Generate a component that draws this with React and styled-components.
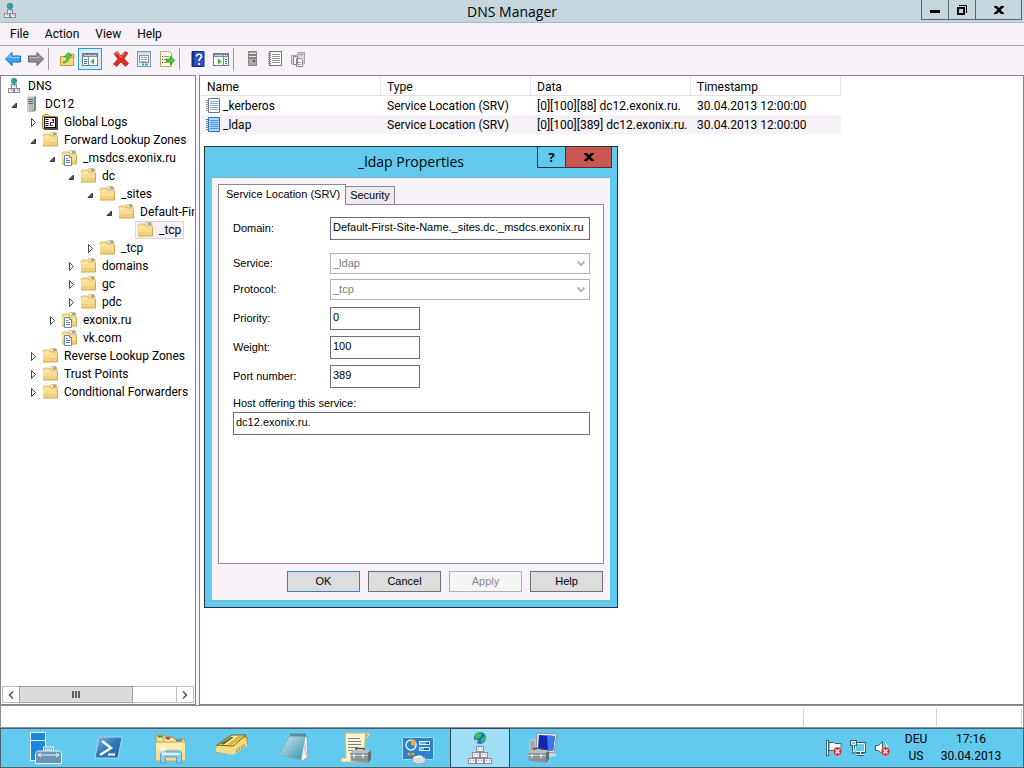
import React, { useState } from "react";
import styled, { createGlobalStyle, css } from "styled-components";

const GlobalStyle = createGlobalStyle`
  * {
    box-sizing: border-box;
  }
  body {
    margin: 0;
    background: #f6f2f7;
    color: #000;
    font: 12px/18px Roboto, sans-serif;
  }
  button, input, select {
    margin: 0;
    padding: 0;
    border: 0;
    border-radius: 0;
    color: inherit;
    font: inherit;
    background: none;
  }
`;

/* small icons, 16x16 */

const Svg = ({ size = 16, children }) => (
  <svg width={size} height={size} viewBox={`0 0 ${size} ${size}`} aria-hidden="true">
    {children}
  </svg>
);

const Box = ({ x, y }) => (
  <g>
    <rect x={x} y={y} width="5" height="4" fill="#f4f3f7" stroke="#8d8a98" />
    <path d={`M${x + 2} ${y + 1.5}h2`} stroke="#8d8a98" />
  </g>
);

const DnsIcon = () => (
  <Svg>
    <circle cx="8" cy="3" r="3" fill="#2a7fd0" />
    <path d="M6 1.500l2-1 1 2-1 1.500-2 .5zM9 3.500l1.500-.5-.5 2-1.500.8z" fill="#3cb54a" />
    <Box x={5.5} y={6.5} />
    <Box x={2.5} y={10.5} />
    <Box x={8.5} y={10.5} />
  </Svg>
);

const ServerIcon = () => (
  <Svg>
    <path d="M4 2l1-2h7l1 2z" fill="#d5d9dc" />
    <path d="M11 2l1-2 1 1v13l-2 2z" fill="#7b858a" />
    <rect x="4" y="1" width="7" height="15" fill="#b4bcc0" />
    <rect x="4" y="1" width="2" height="15" fill="#ccd3d6" />
    <path d="M5 3.500h5M5 5.500h5M5 7.500h5" stroke="#5f686d" />
    <rect x="9" y="13" width="2" height="2" fill="#5be03a" />
  </Svg>
);

const FolderShape = () => (
  <g>
    <path d="M8 4V1.500l1-1h5l1 1V8H8z" fill="#e9c873" stroke="#d0a850" strokeWidth=".6" />
    <path d="M9 2h5" stroke="#fff" strokeWidth="1.500" />
    <path d="M11 2h3" stroke="#4c97d8" strokeWidth="1.500" />
    <path d="M1 14V3l1-1h5l2 2h6v10z" fill="#f7dc94" />
    <path d="M1 10h14v4H1z" fill="#f2cf7c" />
    <path d="M1 4.500V3l1-1h5l2 2h6" fill="none" stroke="#e2be68" />
    <path d="M1 14h14.500V5" fill="none" stroke="#d0a850" />
    <path d="M2 5h5l1 1" fill="none" stroke="#fff0c0" />
  </g>
);

const FolderIcon = () => (
  <Svg>
    <FolderShape />
  </Svg>
);

const ZoneIcon = () => (
  <Svg>
    <FolderShape />
    <path d="M3.500 5.500h5l2 2v8h-7z" fill="#fff" stroke="#7186a5" />
    <path d="M8.500 5.500v2h2" fill="#dfe8f3" stroke="#7186a5" />
    <path d="M5 8.500h2M5 10.500h4M5 12.500h4" stroke="#4b87cc" />
  </Svg>
);

const LogsIcon = () => (
  <Svg>
    <path d="M.5 3V2l1.500-1.500h4L8 2.500h7V4" fill="#f7f19c" stroke="#a59a2c" />
    <path d="M.5 2.500h13v12H.5z" fill="#f4ee9c" stroke="#8f8735" />
    <path d="M14 3h2v13H2v-2h12z" fill="#4b4c44" />
    <rect x="2.500" y="3.500" width="11" height="10" fill="#fff" stroke="#000" />
    <path d="M5 5v8" stroke="#000" strokeWidth="3" strokeDasharray="1 1" />
    <path d="M8.500 8v4M11.500 5v4" stroke="#1c1cc0" />
    <path d="M9 8.500h2M9 11.500h2M10.500 5v2" stroke="#d01616" strokeWidth="1" />
  </Svg>
);

const RecordIcon = ({ active }) => (
  <Svg>
    <path d="M3.500.500h11v14h-11z" fill={active ? "#a9d6f8" : "#fff"} stroke={active ? "#2d6fb5" : "#68748f"} />
    <path
      d="M5 3.500h8.500M5 5.500h8.500M5 7.500h8.500M5 9.500h8.500M5 11.500h8.500"
      stroke={active ? "#4e97dc" : "#86aecb"}
    />
    <path d="M1 2.500h3M1 4.500h3M1 6.500h3M1 8.500h3M1 10.500h3M1 12.500h3" stroke={active ? "#4b7fb5" : "#8d8d95"} />
  </Svg>
);

const ArrowIcon = ({ forward }) => (
  <Svg>
    <path
      d={forward ? "M15.500 8l-6.500-6.500v3.500h-8.500v6h8.500V14.500z" : "M.5 8L7 1.500v3.500h8.500v6H7v3.500z"}
      fill={forward ? "#8f8f92" : "#37a6f0"}
      stroke={forward ? "#5f5f63" : "#1b6db5"}
    />
    <path d={forward ? "M1.500 6.500h9v-2" : "M2.500 7l3-3v2.500h9"} fill="none" stroke={forward ? "#c0c0c4" : "#93d8fb"} />
  </Svg>
);

const FolderUpIcon = () => (
  <Svg>
    <path d="M8 4l1-1h5l1 1v3" fill="#efd07d" stroke="#c29a41" />
    <path d="M1.500 14.500v-9h5l1 1h7v8z" fill="#f5d882" stroke="#c29a41" />
    <path d="M4 11c3 0 4-2 4-5h-3l4-4.500L13 5h-2.500c0 5-3 7-6.500 7z" fill="#55cc33" stroke="#2d9a1a" strokeWidth=".7" />
  </Svg>
);

const ConsoleTreeIcon = ({ right }) => (
  <Svg>
    <rect x=".5" y="2.500" width="15" height="12" fill="#fff" stroke="#6d7b8c" />
    <path d="M1 3h14v3H1z" fill="#7d8b9c" />
    <path d="M2 4.500h8" stroke="#c5d2df" />
    <path d="M11 4.500h1M13 4.500h1" stroke="#fff" />
    <path d={right ? "M10.500 6v8" : "M6.500 6v8"} stroke="#8492a2" />
    <path
      d={right ? "M12 8.500h2M12 10.500h2M12 12.500h2" : "M2 8.500h3M2 10.500h3M2 12.500h3"}
      stroke="#3577c4"
    />
    <path d={right ? "M5 7.500l3.500 3L5 13.500z" : "M12 7.500l-3.500 3 3.500 3z"} fill="#35b52f" />
  </Svg>
);

const DeleteIcon = () => (
  <Svg>
    <path d="M1 3l3-2.500 4 4.500 4-4.500L15 2l-4 5.500 4.500 5-3 3L8 11l-4.500 4.500L.5 13 5 8z" fill="#e12a22" stroke="#a81512" strokeWidth=".6" />
    <path d="M2.500 3L4 2l4 4.500L12 2" stroke="#f58a82" fill="none" />
  </Svg>
);

const PropertiesIcon = () => (
  <Svg>
    <rect x="1.500" y=".5" width="13" height="15" fill="#e9edf2" stroke="#8694a3" />
    <path d="M2 2h12" stroke="#b6c2ce" />
    <rect x="3.500" y="4.500" width="9" height="7" fill="#fff" stroke="#8694a3" />
    <path d="M5 6.500h2M5 8.500h2" stroke="#56a8dd" />
    <path d="M8 6.500h3M8 8.500h3M5 10.500h5" stroke="#9aa5b0" />
    <path d="M6 13.500h2M9 13.500h3" stroke="#2fa8e0" strokeWidth="2" />
  </Svg>
);

const ExportIcon = () => (
  <Svg>
    <path d="M1.500.5h9l2 2v13h-11z" fill="#fdf8dc" stroke="#b4a878" />
    <path d="M3 5.500h1M3 8.500h1M3 11.500h1" stroke="#333" />
    <path d="M5 5.500h5M5 8.500h3M5 11.500h3" stroke="#8c8fa0" />
    <path d="M7.500 8h4V5l4 4.500-4 4.500v-3h-4z" fill="#58cb3e" stroke="#2f9b20" />
  </Svg>
);

const HelpIcon = () => (
  <Svg>
    <path d="M2 .5h12v15H2z" fill="#2d50c4" stroke="#152d83" />
    <path d="M2 1h2v14H2z" fill="#152d83" />
    <path d="M6.500 5.500c0-3 5-3 5 0 0 2-2.500 2-2.500 4.500M9 12v2" stroke="#fff" strokeWidth="1.700" fill="none" />
  </Svg>
);

const GrayServerIcon = () => (
  <Svg>
    <path d="M4.500.500h8v14h-8z" fill="#a9a9a9" stroke="#858585" />
    <path d="M5 2.500h7M5 5.500h7" stroke="#e6e6e6" />
    <path d="M5 4h7M5 7h7" stroke="#555" />
    <rect x="9" y="9" width="2" height="2" fill="#555" />
  </Svg>
);

const GrayRecordIcon = () => (
  <Svg>
    <rect x="2.500" y=".5" width="12" height="14" fill="#fafafa" stroke="#777" />
    <path d="M5 3.500h8M5 5.500h8M5 7.500h8M5 9.500h8M5 11.500h8" stroke="#999" />
    <path d="M1 2.500h3M1 4.500h3M1 6.500h3M1 8.500h3M1 10.500h3M1 12.500h3" stroke="#888" />
  </Svg>
);

const GrayZoneIcon = () => (
  <Svg>
    <path d="M1.500 13V4.500h6v-3h7v11.500z" fill="#d6d6d6" stroke="#a5a5a5" />
    <path d="M9 3.500h4" stroke="#888" />
    <path d="M3.500 5.500h4v8h-4zM6.500 7.500h4l2 2v6h-6z" fill="#f8f8f8" stroke="#888" />
    <path d="M8 11.500h3M8 13.500h3" stroke="#999" />
  </Svg>
);

const Expander = ({ open }) => (
  <svg width="12" height="12" viewBox="0 0 12 12" aria-hidden="true">
    {open ? (
      <path d="M8.500 5v4.500H4z" fill="#595959" stroke="#333" />
    ) : (
      <path d="M4.500 2.500v8l4-4z" fill="#fff" stroke="#444" />
    )}
  </svg>
);

const CloseGlyph = () => (
  <svg width="10" height="8" viewBox="0 0 10 8" aria-hidden="true">
    <path d="M0 0h3l2 2 2-2h3v1L6.500 4 10 7v1H7L5 6 3 8H0V7l3.500-3L0 1z" fill="#000" />
  </svg>
);

/* taskbar icons, 32x32 */

const Toolcase = ({ x, y }) => (
  <g transform={`translate(${x} ${y})`}>
    <path d="M6 5V1.500h8V5" fill="none" stroke="#4e5557" strokeWidth="1.500" />
    <path d="M0 6l4-3h16l-2 3z" fill="#b9bfc1" />
    <path d="M18 6l3-3v9l-3 4z" fill="#666d70" />
    <path d="M0 6h18v10L1 14z" fill="#8c9497" />
    <path d="M0 8.500h18" stroke="#cdd2d4" />
    <path d="M4 7v4M13 7v4" stroke="#e8eaeb" strokeWidth="1.500" />
  </g>
);

const ServerManagerIcon = () => (
  <Svg size={32}>
    <path d="M.5.500h15v28H.5z" fill="#1e87dc" stroke="#e9f6ff" />
    <path d="M1 8.500h14" stroke="#e9f6ff" />
    <path d="M14.500 19v-3h8v3" fill="none" stroke="#e9f6ff" strokeWidth="3" />
    <path d="M14.500 19v-3h8v3" fill="none" stroke="#688fae" />
    <path d="M5.500 31.500v-10l2-2.500h22l2 2.500v10z" fill="#6c94b4" stroke="#e9f6ff" />
    <path d="M9 23h19M11 21l-3 2 3 2M26 21l3 2-3 2" fill="none" stroke="#e9f6ff" />
  </Svg>
);

const PowerShellIcon = () => (
  <Svg size={32}>
    <defs>
      <linearGradient id="ps" x1="0" y1="0" x2="1" y2="1">
        <stop offset="0" stopColor="#7fb6dd" />
        <stop offset=".5" stopColor="#2f76b8" />
        <stop offset="1" stopColor="#2463a3" />
      </linearGradient>
    </defs>
    <path d="M7 5h23l-4 21H3z" fill="url(#ps)" stroke="#a8d5f2" />
    <path d="M10 9l9 7-11 7" fill="none" stroke="#fff" strokeWidth="2.500" />
    <path d="M16 22.500h7" stroke="#fff" strokeWidth="2" />
  </Svg>
);

const ExplorerIcon = () => (
  <Svg size={32}>
    <path d="M2 8V5l1-2h8l1 2h8l1 2h10v6H2z" fill="#f3dd94" stroke="#bb923f" />
    <path d="M10 10V5.500h9l2 2.500" fill="#fff3c6" stroke="#bb923f" />
    <path d="M4 4.500h5" stroke="#25a73c" strokeWidth="2" />
    <path d="M12 6.500h4" stroke="#c9302c" strokeWidth="2" />
    <path d="M22 8.500h6" stroke="#2f86d4" strokeWidth="2" />
    <path d="M1.500 29V10h30v19z" fill="#f5de95" stroke="#cfa752" />
    <path d="M2 11h29v6H2z" fill="#fbecb4" />
    <path d="M6.500 31V21l2-2h17l2 2v10h-5v-6h-11v6z" fill="#8ecdf0" stroke="#5a9dca" />
    <path d="M8 22h18" stroke="#d9f2ff" strokeWidth="2" />
    <path d="M9 13v10M5 17.500h9M6 14l6 7M12 14l-6 7" stroke="#fff" opacity=".8" />
  </Svg>
);

const PackageIcon = () => (
  <Svg size={32}>
    <path d="M0 14L14 5h17v7L17 22 0 20z" fill="#f1dc7b" stroke="#99822d" />
    <path d="M0 15l17 3L31 9v5L17 23 0 20z" fill="#efdc8c" />
    <path d="M1 13L16 3h14L17 14z" fill="#fff0a0" stroke="#655611" />
    <path d="M4 12L15 5h3L8 12.500z" fill="#6a6426" />
    <path d="M11 12.500L22 4h6L16 13z" fill="#d8b93a" />
    <path d="M20 18l9-6M20 20l9-6" stroke="#8c7a35" strokeDasharray="2 1" />
  </Svg>
);

const NotepadIcon = () => (
  <Svg size={32}>
    <defs>
      <linearGradient id="np" x1="0" y1="0" x2="1" y2="1">
        <stop offset="0" stopColor="#d6eef6" />
        <stop offset="1" stopColor="#358fad" />
      </linearGradient>
    </defs>
    <path d="M21 4l8 1 1 20-7 5z" fill="#f6f7f8" stroke="#9aa0a5" />
    <path d="M24 6l5 21M26 6l3 19" stroke="#c2c6ca" />
    <path d="M12 3h15l-4 25L1 23z" fill="url(#np)" stroke="#76b4cb" />
    <path d="M13 1.500v3M15 1.500v3M17 1.500v3M19 1.500v3M21 1.500v3M23 1.500v3M25 1.500v3M27 1.500v3" stroke="#4c5357" />
  </Svg>
);

const ScrollIcon = () => (
  <Svg size={32}>
    <path d="M5 1h22c3 0 3 4 0 5h-2v24H3c-3 0-3-3 0-4h3z" fill="#fbf3d1" stroke="#cbb672" />
    <path d="M25 1c4 0 4 5 0 5z" fill="#cbb672" />
    <path d="M8 6.500h12M8 9.500h13M8 12.500h13M8 15.500h10M8 18.500h5" stroke="#7b7f86" />
    <Toolcase x={10} y={15} />
  </Svg>
);

const ControlPanelIcon = () => (
  <Svg size={32}>
    <rect x=".5" y="5.500" width="31" height="22" rx="1" fill="#2d82c9" stroke="#a9daf6" />
    <circle cx="9" cy="13" r="5" fill="none" stroke="#e8f5ff" strokeWidth="1.500" />
    <path d="M9 13V7.500l5 1.500-1 5z" fill="#f6a723" />
    <path d="M17.500 9.500h10v3h-10zM17.500 15.500h10v3h-10z" fill="#4ac2ec" stroke="#e8f5ff" />
    <path d="M24 10h3v2h-3zM22 16h5v2h-5z" fill="#1d5f9d" />
    <circle cx="7" cy="22" r="1.500" fill="#f6a723" />
    <circle cx="11" cy="22" r="1.500" fill="#f6a723" />
    <ellipse cx="17" cy="28" rx="7" ry="4" fill="#d9dde0" stroke="#92989c" />
    <path d="M12 26c2-2 6-2 8-1" stroke="#fff" fill="none" strokeWidth="1.500" />
  </Svg>
);

const Block = ({ x, y }) => (
  <g>
    <rect x={x + 0.5} y={y + 0.5} width="7" height="5" fill="#f1eff4" stroke="#8f8c98" />
    <path d={`M${x + 2} ${y + 2.5}h1M${x + 5} ${y + 2.5}h1`} stroke="#8f8c98" />
  </g>
);

const DnsManagerIcon = () => (
  <Svg size={32}>
    <circle cx="16" cy="6" r="6" fill="#1a6fc9" />
    <path d="M11 3l4-3 3 2-2 4-4 1zM17 7l4-3 1 3-3 4-2-1z" fill="#3fbf4a" />
    <path d="M11 7l3 2-1 2-2-2z" fill="#b8ecc0" />
    <Block x={12} y={14} />
    <Block x={8} y={20} />
    <Block x={16} y={20} />
    <Block x={4} y={26} />
    <Block x={12} y={26} />
    <Block x={20} y={26} />
  </Svg>
);

const ComputerIcon = () => (
  <Svg size={32}>
    <path d="M4 9l5-2v18l-5-1z" fill="#9ea5aa" stroke="#e7e9ea" strokeWidth=".6" />
    <path d="M11 1l20 1-3 19-18-2z" fill="#eceff2" stroke="#8d959b" />
    <path d="M13 3l16 1-2 15-15-2z" fill="#1426b8" />
    <path d="M21 3.500l8 .5-2 15-5-1z" fill="#3f78e8" />
    <path d="M18 22l12-1v3l-10 2z" fill="#d1d5d8" />
    <Toolcase x={2} y={15} />
  </Svg>
);

/* tray icons */

const ErrorBadge = () => (
  <g>
    <circle cx="11.500" cy="11.500" r="4.500" fill="#d9302c" stroke="#f6d0cd" strokeWidth=".5" />
    <path d="M9.500 9.500l4 4M13.500 9.500l-4 4" stroke="#fff" strokeWidth="1.500" />
  </g>
);

const FlagIcon = () => (
  <Svg>
    <path d="M1.500 0v16" stroke="#36667a" strokeWidth="3" />
    <path d="M1.500 1v14" stroke="#fff" />
    <path d="M3 2.500h5l1 1h6v8H9l-1-1H3z" fill="#fff" stroke="#36667a" />
    <ErrorBadge />
  </Svg>
);

const NetworkIcon = () => (
  <Svg>
    <path d="M5.500 3.500h9v8h-9zM7 14.500h7M10.500 12v2" fill="none" stroke="#2f5f74" strokeWidth="3" />
    <path d="M5.500 3.500h9v8h-9zM7 14.500h7M10.500 12v2" fill="#62caef" stroke="#fff" />
    <path d="M1.500 1.500h4v3h-4zM3.500 5v7h2" fill="#62caef" stroke="#2f5f74" strokeWidth="3" />
    <path d="M1.500 1.500h4v3h-4zM3.500 5v7h2" fill="#62caef" stroke="#fff" />
  </Svg>
);

const SpeakerIcon = () => (
  <Svg>
    <path d="M1.500 5.500h3l4-4v13l-4-4h-3z" fill="#fff" stroke="#36667a" />
    <path d="M11 3c3 2 3 7 1 9" stroke="#fff" fill="none" />
    <ErrorBadge />
  </Svg>
);

const treeItems = [
  { level: 0, label: "DNS", icon: DnsIcon },
  { level: 1, label: "DC12", icon: ServerIcon, open: true },
  { level: 2, label: "Global Logs", icon: LogsIcon, open: false },
  { level: 2, label: "Forward Lookup Zones", icon: FolderIcon, open: true },
  { level: 3, label: "_msdcs.exonix.ru", icon: ZoneIcon, open: true },
  { level: 4, label: "dc", icon: FolderIcon, open: true },
  { level: 5, label: "_sites", icon: FolderIcon, open: true },
  { level: 6, label: "Default-First-Site-Name", icon: FolderIcon, open: true },
  { level: 7, label: "_tcp", icon: FolderIcon, selected: true },
  { level: 5, label: "_tcp", icon: FolderIcon, open: false },
  { level: 4, label: "domains", icon: FolderIcon, open: false },
  { level: 4, label: "gc", icon: FolderIcon, open: false },
  { level: 4, label: "pdc", icon: FolderIcon, open: false },
  { level: 3, label: "exonix.ru", icon: ZoneIcon, open: false },
  { level: 3, label: "vk.com", icon: ZoneIcon },
  { level: 2, label: "Reverse Lookup Zones", icon: FolderIcon, open: false },
  { level: 2, label: "Trust Points", icon: FolderIcon, open: false },
  { level: 2, label: "Conditional Forwarders", icon: FolderIcon, open: false },
];

const records = [
  {
    name: "_kerberos",
    type: "Service Location (SRV)",
    data: "[0][100][88] dc12.exonix.ru.",
    time: "30.04.2013 12:00:00",
  },
  {
    name: "_ldap",
    type: "Service Location (SRV)",
    data: "[0][100][389] dc12.exonix.ru.",
    time: "30.04.2013 12:00:00",
    selected: true,
  },
];

const taskbarApps = [
  { name: "Server Manager", icon: ServerManagerIcon },
  { name: "Windows PowerShell", icon: PowerShellIcon },
  { name: "File Explorer", icon: ExplorerIcon },
  { name: "Package", icon: PackageIcon },
  { name: "Notepad", icon: NotepadIcon },
  { name: "Script Tools", icon: ScrollIcon },
  { name: "Control Panel", icon: ControlPanelIcon },
  { name: "DNS Manager", icon: DnsManagerIcon, active: true },
  { name: "Computer Management", icon: ComputerIcon },
];

const PropertiesDialog = () => {
  const [form, setForm] = useState({
    domain: "Default-First-Site-Name._sites.dc._msdcs.exonix.ru",
    priority: "0",
    weight: "100",
    port: "389",
    host: "dc12.exonix.ru.",
  });

  const bind = (key) => ({
    id: key,
    value: form[key],
    onChange: (e) => setForm({ ...form, [key]: e.target.value }),
  });

  return (
    <Dialog role="dialog" aria-labelledby="dialog-title">
      <DialogBar>
        <DialogTitle id="dialog-title">_ldap Properties</DialogTitle>
        <DialogControls>
          <HelpButton aria-label="Help">?</HelpButton>
          <DialogClose aria-label="Close">
            <CloseGlyph />
          </DialogClose>
        </DialogControls>
      </DialogBar>
      <DialogBody>
        <Tabs role="tablist">
          <Tab role="tab" $active>Service Location (SRV)</Tab>
          <Tab role="tab">Security</Tab>
        </Tabs>
        <Panel role="tabpanel">
          <Field $space={13}>
            <label htmlFor="domain">Domain:</label>
            <TextInput {...bind("domain")} />
          </Field>
          <Field $space={5}>
            <label htmlFor="service">Service:</label>
            <SelectWrap>
              <Select id="service" disabled>
                <option>_ldap</option>
              </Select>
              <Chevron />
            </SelectWrap>
          </Field>
          <Field $space={7}>
            <label htmlFor="protocol">Protocol:</label>
            <SelectWrap>
              <Select id="protocol" disabled>
                <option>_tcp</option>
              </Select>
              <Chevron />
            </SelectWrap>
          </Field>
          <Field $space={6}>
            <label htmlFor="priority">Priority:</label>
            <TextInput $short {...bind("priority")} />
          </Field>
          <Field $space={6}>
            <label htmlFor="weight">Weight:</label>
            <TextInput $short {...bind("weight")} />
          </Field>
          <Field $space={9}>
            <label htmlFor="port">Port number:</label>
            <TextInput $short {...bind("port")} />
          </Field>
          <HostLabel htmlFor="host">Host offering this service:</HostLabel>
          <TextInput {...bind("host")} />
        </Panel>
        <Actions>
          <PushButton $primary>OK</PushButton>
          <PushButton>Cancel</PushButton>
          <PushButton disabled>Apply</PushButton>
          <PushButton>Help</PushButton>
        </Actions>
      </DialogBody>
    </Dialog>
  );
};

const Chevron = () => (
  <ChevronSvg width="8" height="6" viewBox="0 0 8 6" aria-hidden="true">
    <path d="M.5.500L4 4 7.500.500" fill="none" stroke="#b8b8bc" strokeWidth="2" />
  </ChevronSvg>
);

const App = () => (
  <>
    <GlobalStyle />
    <Desktop>
      <TitleBar>
        <TitleIcon><DnsIcon /></TitleIcon>
        <Title>DNS Manager</Title>
        <WindowControls>
          <WindowButton aria-label="Minimize">
            <svg width="10" height="6" aria-hidden="true"><rect y="3" width="10" height="3" /></svg>
          </WindowButton>
          <WindowButton aria-label="Restore">
            <svg width="10" height="10" viewBox="0 0 10 10" fill="none" stroke="#000" aria-hidden="true">
              <path d="M2 .5h7.500V8" />
              <path d="M1 3h6v6H1z" strokeWidth="2" />
            </svg>
          </WindowButton>
          <WindowButton aria-label="Close" $wide>
            <CloseGlyph />
          </WindowButton>
        </WindowControls>
      </TitleBar>
      <MenuBar>
        <MenuItem>File</MenuItem>
        <MenuItem>Action</MenuItem>
        <MenuItem>View</MenuItem>
        <MenuItem>Help</MenuItem>
      </MenuBar>
      <Toolbar>
        <Tool aria-label="Back"><ArrowIcon /></Tool>
        <Tool aria-label="Forward"><ArrowIcon forward /></Tool>
        <Separator />
        <Tool aria-label="Up one level"><FolderUpIcon /></Tool>
        <Tool aria-label="Show console tree" $pressed><ConsoleTreeIcon /></Tool>
        <Spacer />
        <Tool aria-label="Delete"><DeleteIcon /></Tool>
        <Tool aria-label="Properties"><PropertiesIcon /></Tool>
        <Tool aria-label="Export list"><ExportIcon /></Tool>
        <Separator />
        <Tool aria-label="Help topics"><HelpIcon /></Tool>
        <Tool aria-label="Show action pane"><ConsoleTreeIcon right /></Tool>
        <Separator />
        <Tool aria-label="New server"><GrayServerIcon /></Tool>
        <Tool aria-label="New record"><GrayRecordIcon /></Tool>
        <Tool aria-label="New zone"><GrayZoneIcon /></Tool>
      </Toolbar>
      <Main>
        <TreePane>
          <Tree>
            {treeItems.map(({ level, label, icon: Icon, open, selected }, i) => (
              <TreeRow key={i} $level={level}>
                {level > 0 && (
                  <ExpanderSlot>{open !== undefined && <Expander open={open} />}</ExpanderSlot>
                )}
                <TreeLabel $selected={selected}>
                  <Icon />
                  {label}
                </TreeLabel>
              </TreeRow>
            ))}
          </Tree>
          <Scrollbar>
            <ScrollButton aria-label="Scroll left">
              <svg width="6" height="8" aria-hidden="true">
                <path d="M5 .5L1.500 4 5 7.500" fill="none" stroke="#555" strokeWidth="1.500" />
              </svg>
            </ScrollButton>
            <Thumb>
              <svg width="8" height="7" aria-hidden="true">
                <path d="M1 0v7M4 0v7M7 0v7" stroke="#606060" strokeWidth="2" />
              </svg>
            </Thumb>
            <Track />
            <ScrollButton aria-label="Scroll right">
              <svg width="6" height="8" aria-hidden="true">
                <path d="M1 .5L4.500 4 1 7.500" fill="none" stroke="#555" strokeWidth="1.500" />
              </svg>
            </ScrollButton>
          </Scrollbar>
        </TreePane>
        <ListPane>
          <Table>
            <colgroup>
              <col width="180" />
              <col width="150" />
              <col width="160" />
              <col width="150" />
            </colgroup>
            <thead>
              <tr>
                <th>Name</th>
                <th>Type</th>
                <th>Data</th>
                <th>Timestamp</th>
              </tr>
            </thead>
            <tbody>
              {records.map((r) => (
                <RecordRow key={r.name} $selected={r.selected}>
                  <td>
                    <NameCell>
                      <RecordIcon active={r.selected} />
                      {r.name}
                    </NameCell>
                  </td>
                  <td>{r.type}</td>
                  <td>{r.data}</td>
                  <td>{r.time}</td>
                </RecordRow>
              ))}
            </tbody>
          </Table>
          <PropertiesDialog />
        </ListPane>
      </Main>
      <StatusBar>
        <StatusCell $grow />
        <StatusCell $width={133} />
        <StatusCell $width={85} />
      </StatusBar>
      <Taskbar>
        <Apps>
          {taskbarApps.map(({ name, icon: Icon, active }) => (
            <AppButton key={name} aria-label={name} $active={active}>
              <Icon />
            </AppButton>
          ))}
        </Apps>
        <Tray>
          <FlagIcon />
          <NetworkIcon />
          <SpeakerIcon />
        </Tray>
        <TrayText>
          <span>DEU</span>
          <span>US</span>
        </TrayText>
        <TrayText $clock>
          <span>17:16</span>
          <span>30.04.2013</span>
        </TrayText>
      </Taskbar>
    </Desktop>
  </>
);

const Desktop = styled.div`
  display: flex;
  flex-direction: column;
  min-height: 100vh;
`;

const TitleBar = styled.header`
  display: grid;
  grid-template-columns: 1fr auto 1fr;
  align-items: start;
  height: 23px;
  background: #c5d6dc;
  border-bottom: 1px solid #aab6c6;
`;

const TitleIcon = styled.span`
  display: flex;
  padding: 3px 0 0 2px;
`;

const Title = styled.h1`
  margin: 0;
  font: 14px/23px "Open Sans", sans-serif;
`;

const WindowControls = styled.div`
  display: flex;
  justify-content: flex-end;
  padding-right: 2px;
`;

const WindowButton = styled.button`
  display: flex;
  align-items: center;
  justify-content: center;
  width: ${(p) => (p.$wide ? 47 : 28)}px;
  height: 20px;
  margin-left: -1px;
  border: solid #56666e;
  border-width: 0 1px 1px;
`;

const MenuBar = styled.nav`
  display: flex;
  gap: 16px;
  height: 23px;
  padding: 0 10px;
  border-bottom: 1px solid #a6a5ab;
`;

const MenuItem = styled.button`
  line-height: 22px;
`;

const Toolbar = styled.div`
  display: flex;
  align-items: center;
  height: 29px;
  padding: 0 1px 4px;
`;

const Tool = styled.button`
  display: flex;
  align-items: center;
  justify-content: center;
  width: 23px;
  height: 22px;
  ${(p) =>
    p.$pressed &&
    css`
      width: 24px;
      border: 1px solid #3399dd;
      background: #d8ecf9;
    `}
`;

const Separator = styled.span`
  width: 1px;
  height: 22px;
  margin: 0 6px 0 1px;
  background: #9b9aa0;
`;

const Spacer = styled.span`
  width: 7px;
`;

const Main = styled.main`
  display: flex;
  flex: 1;
  gap: 3px;
`;

const TreePane = styled.aside`
  display: flex;
  flex: 0 0 196px;
  flex-direction: column;
  min-width: 0;
  padding: 1px 1px 0;
  border: 1px solid #85828f;
  background: #fff;
`;

const Tree = styled.ul`
  flex: 1;
  margin: 0;
  padding: 0;
  overflow: hidden;
  list-style: none;
`;

const TreeRow = styled.li`
  display: flex;
  align-items: center;
  height: 18px;
  padding-left: ${(p) => (p.$level ? p.$level * 19 - 13 : 2)}px;
`;

const ExpanderSlot = styled.span`
  display: flex;
  flex: 0 0 13px;
`;

const TreeLabel = styled.span`
  display: flex;
  align-items: center;
  gap: 6px;
  height: 18px;
  padding: 0 2px 0 1px;
  border: 1px solid ${(p) => (p.$selected ? "#d9d6da" : "transparent")};
  background: ${(p) => (p.$selected ? "#f6f2f7" : "none")};
  white-space: nowrap;
  svg {
    flex: none;
  }
`;

const Scrollbar = styled.div`
  display: flex;
  height: 17px;
  margin-bottom: 1px;
  border: 1px solid #c0bec2;
`;

const ScrollButton = styled.button`
  display: flex;
  align-items: center;
  justify-content: center;
  width: 16px;
`;

const Thumb = styled.div`
  display: flex;
  flex: 0 0 60%;
  align-items: center;
  justify-content: center;
  margin: -1px 0;
  border: 1px solid #a3a3a3;
  background: #dcdcdc;
`;

const Track = styled.div`
  flex: 1;
  border-right: 1px solid #c0bec2;
`;

const ListPane = styled.section`
  position: relative;
  flex: 1;
  padding: 1px;
  border: 1px solid #85828f;
  background: #fff;
`;

const Table = styled.table`
  width: 640px;
  table-layout: fixed;
  border-collapse: separate;
  border-spacing: 0;
  th, td {
    height: 19px;
    padding: 0 0 0 6px;
    line-height: 18px;
    font-weight: 400;
    text-align: left;
    white-space: nowrap;
  }
  th {
    padding-top: 2px;
    line-height: 16px;
    border-right: 1px solid #e5e0e4;
    border-bottom: 1px solid #e5e0e4;
  }
`;

const RecordRow = styled.tr`
  td {
    background: ${(p) => (p.$selected ? "#f6f2f7" : "none")};
  }
  td:first-child {
    padding-left: 4px;
  }
`;

const NameCell = styled.span`
  display: flex;
  align-items: center;
  gap: 2px;
`;

const Dialog = styled.div`
  position: absolute;
  top: 70px;
  left: 4px;
  width: 414px;
  padding: 0 7px 6px;
  border: 1px solid #24353d;
  background: #62caef;
`;

const DialogBar = styled.div`
  display: grid;
  grid-template-columns: 1fr auto 1fr;
  height: 30px;
`;

const DialogTitle = styled.h2`
  grid-column: 2;
  margin: 0;
  font: 14px/30px "Open Sans", sans-serif;
`;

const DialogControls = styled.div`
  display: flex;
  align-items: flex-start;
  justify-content: flex-end;
  margin-right: -2px;
`;

const HelpButton = styled.button`
  width: 29px;
  height: 21px;
  border: solid #24353d;
  border-width: 0 1px 1px;
  font: 700 13px "Open Sans", sans-serif;
`;

const DialogClose = styled.button`
  display: flex;
  align-items: center;
  justify-content: center;
  width: 47px;
  height: 21px;
  margin-left: -1px;
  border: solid #5a2a2a;
  border-width: 0 1px 1px;
  background: #c75750;
`;

const DialogBody = styled.div`
  padding: 6px 6px 8px;
  border: solid #7fb0c4;
  border-width: 1px 0;
  background: #f6f2f7;
  font: 11px/13px "Liberation Sans", Arial, sans-serif;
`;

const Tabs = styled.div`
  display: flex;
  align-items: flex-end;
`;

const Tab = styled.button`
  height: 18px;
  padding: 0 4px;
  border: 1px solid #8b8a93;
  border-width: 1px 1px 0 0;
  background: #eeeaef;
  ${(p) =>
    p.$active &&
    css`
      height: 21px;
      margin-bottom: -1px;
      padding: 0 5px 2px 7px;
      border-left-width: 1px;
      background: #fff;
    `}
`;

const Panel = styled.div`
  min-height: 360px;
  padding: 12px 13px 12px 14px;
  border: 1px solid #8b8a93;
  background: #fff;
`;

const Field = styled.div`
  display: grid;
  grid-template-columns: 97px 1fr;
  align-items: center;
  margin-bottom: ${(p) => p.$space}px;
`;

const TextInput = styled.input`
  width: ${(p) => (p.$short ? "90px" : "100%")};
  height: 23px;
  padding: 0 2px 3px;
  border: 1px solid #6f6e73;
  background: #fff;
`;

const SelectWrap = styled.div`
  display: grid;
  align-items: center;
`;

const Select = styled.select`
  grid-area: 1 / 1;
  height: 21px;
  padding: 0 2px;
  border: 1px solid #b0afb3;
  background: #fff;
  color: #7b7b7e;
  opacity: 1;
  appearance: none;
`;

const ChevronSvg = styled.svg`
  grid-area: 1 / 1;
  justify-self: end;
  margin-right: 5px;
`;

const HostLabel = styled.label`
  display: block;
  margin-bottom: 2px;
`;

const Actions = styled.div`
  display: flex;
  justify-content: flex-end;
  gap: 8px;
  padding: 7px 1px 0 0;
`;

const PushButton = styled.button`
  width: 73px;
  height: 21px;
  border: 1px solid ${(p) => (p.$primary ? "#3c7fb1" : "#707070")};
  background: #dddddd;
  &:disabled {
    border-color: #b0afb3;
    background: #f5f5f5;
    color: #8b8a8e;
  }
`;

const StatusBar = styled.footer`
  display: flex;
  height: 23px;
  padding: 2px 1px 1px 0;
  border: 1px solid #8f8d96;
  background: #fff;
`;

const StatusCell = styled.div`
  flex: ${(p) => (p.$grow ? "1" : `0 0 ${p.$width}px`)};
  border-right: 1px solid #d3d1d4;
`;

const Taskbar = styled.footer`
  display: flex;
  align-items: stretch;
  height: 40px;
  border: 1px solid #4a5f69;
  background: #62caef;
`;

const Apps = styled.div`
  display: flex;
  flex: 1;
  gap: 2px;
  padding-left: 15px;
`;

const AppButton = styled.button`
  display: flex;
  align-items: center;
  justify-content: center;
  width: 60px;
  ${(p) =>
    p.$active &&
    css`
      margin: -1px 0;
      border: 1px solid #2c4955;
      background: #a0dff7;
    `}
`;

const Tray = styled.div`
  display: flex;
  align-items: center;
  gap: 8px;
`;

const TrayText = styled.div`
  display: flex;
  flex-direction: column;
  align-items: center;
  justify-content: center;
  width: ${(p) => (p.$clock ? 66 : 40)}px;
  margin: 0 ${(p) => (p.$clock ? 19 : 0)}px 0 ${(p) => (p.$clock ? 2 : 6)}px;
  line-height: 17px;
`;

export default App;
